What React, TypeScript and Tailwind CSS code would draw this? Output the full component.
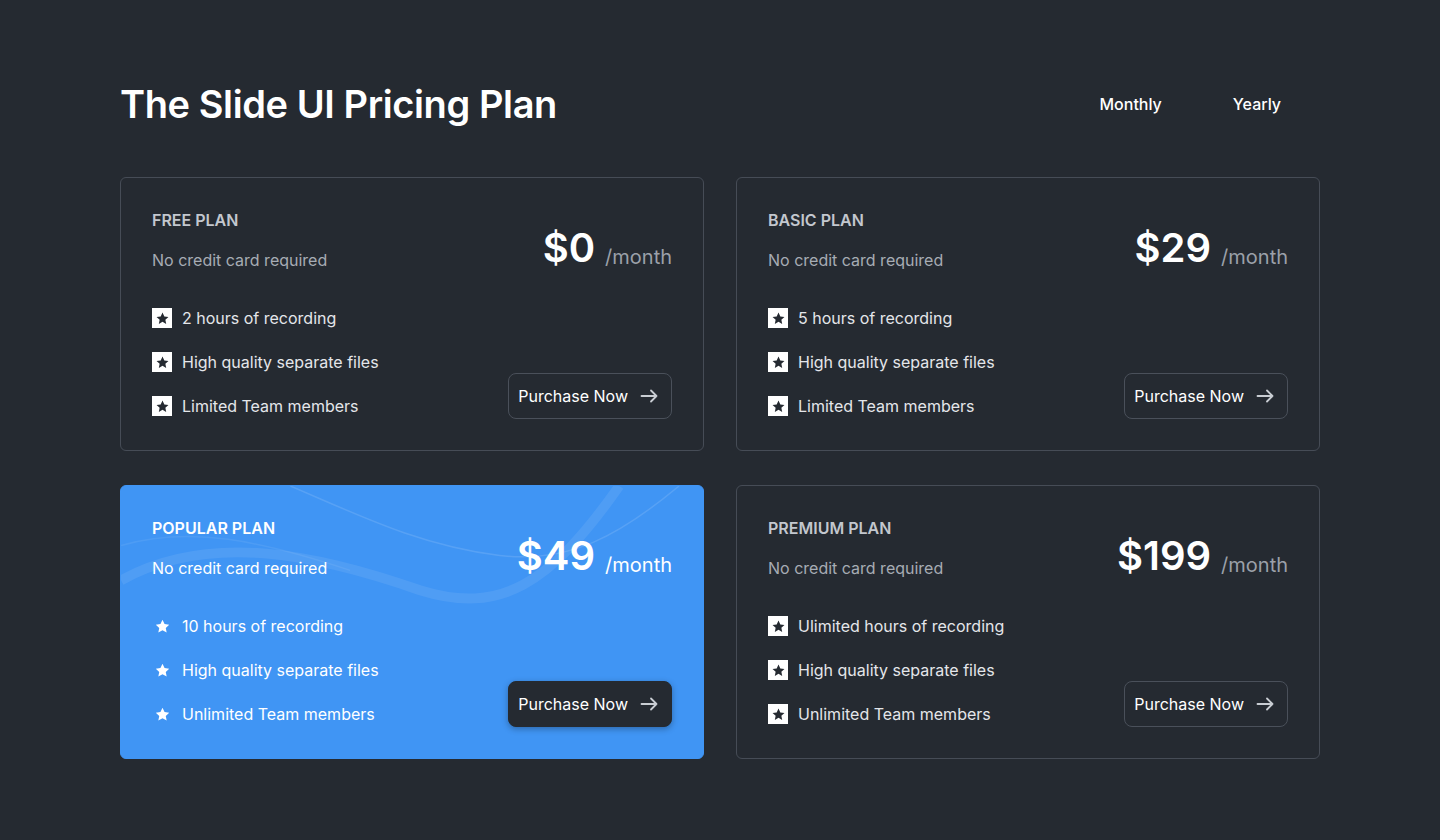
type Plan = {
  name: string;
  price: string;
  features: string[];
  popular?: boolean;
};

const plans: Plan[] = [
  {
    name: "Free Plan",
    price: "$0",
    features: ["2 hours of recording", "High quality separate files", "Limited Team members"],
  },
  {
    name: "Basic Plan",
    price: "$29",
    features: ["5 hours of recording", "High quality separate files", "Limited Team members"],
  },
  {
    name: "Popular Plan",
    price: "$49",
    popular: true,
    features: ["10 hours of recording", "High quality separate files", "Unlimited Team members"],
  },
  {
    name: "Premium Plan",
    price: "$199",
    features: ["Ulimited hours of recording", "High quality separate files", "Unlimited Team members"],
  },
];

function StarShape({ className }: { className?: string }) {
  return (
    <svg viewBox="0 0 24 24" className={className}>
      <path
        d="M12 2.5l2.9 6.1 6.6.8-4.9 4.6 1.3 6.6L12 17.3l-5.9 3.3 1.3-6.6-4.9-4.6 6.6-.8z"
        fill="currentColor"
      />
    </svg>
  );
}

function Arrow() {
  return (
    <svg
      viewBox="0 0 18 14"
      className="w-[18px] h-[14px] text-[#c9cdd3]"
      fill="none"
      stroke="currentColor"
      strokeWidth="1.8"
      strokeLinecap="round"
      strokeLinejoin="round"
    >
      <path d="M1.5 7h15M11 1.5L16.5 7 11 12.5" />
    </svg>
  );
}

function Waves() {
  return (
    <svg
      className="absolute inset-0 w-full h-full pointer-events-none"
      viewBox="0 0 584 274"
      preserveAspectRatio="none"
    >
      <path
        d="M0 95 C 90 45, 200 70, 300 105 C 380 130, 430 100, 500 0"
        stroke="#ffffff"
        strokeOpacity="0.08"
        strokeWidth="10"
        fill="none"
      />
      <path
        d="M170 0 C 240 30, 300 60, 380 70 C 450 78, 500 50, 560 0"
        stroke="#ffffff"
        strokeOpacity="0.12"
        strokeWidth="1.5"
        fill="none"
      />
      <path
        d="M0 60 C 70 40, 140 55, 230 85"
        stroke="#ffffff"
        strokeOpacity="0.07"
        strokeWidth="1.5"
        fill="none"
      />
    </svg>
  );
}

function PlanCard({ plan }: { plan: Plan }) {
  const pop = plan.popular;

  return (
    <div
      className={
        pop
          ? "relative overflow-hidden rounded-md bg-[#4095f4] border border-[#4095f4] px-[31px] pt-[30px] pb-8"
          : "relative overflow-hidden rounded-md border border-[#464c56] px-[31px] pt-[30px] pb-8"
      }
    >
      {pop && <Waves />}

      <div className="relative flex justify-between">
        {/* LEFT */}
        <div>
          <div
            className={
              pop
                ? "uppercase font-semibold text-base leading-6 text-white"
                : "uppercase font-semibold text-base leading-6 text-[#c3c7ce]"
            }
          >
            {plan.name}
          </div>

          <div
            className={
              pop
                ? "mt-4 text-base leading-6 text-white"
                : "mt-4 text-base leading-6 text-[#a7acb4]"
            }
          >
            No credit card required
          </div>

          <div className="mt-[34px] flex flex-col gap-5">
            {plan.features.map((f) => (
              <div key={f} className="flex items-center gap-[10px] leading-6">
                {pop ? (
                  <span className="w-5 h-5 flex items-center justify-center">
                    <StarShape className="w-[17px] h-[17px] text-white" />
                  </span>
                ) : (
                  <span className="w-5 h-5 bg-white flex items-center justify-center">
                    <StarShape className="w-[15px] h-[15px] text-[#252a31]" />
                  </span>
                )}
                <span className={pop ? "text-white" : "text-[#e4e6ea]"}>{f}</span>
              </div>
            ))}
          </div>
        </div>

        {/* RIGHT */}
        <div className="flex flex-col items-end justify-between">
          <div className="flex items-baseline gap-[10px] mt-[12px]">
            <span className="text-[40px] leading-[56px] font-semibold text-white">
              {plan.price}
            </span>
            <span
              className={
                pop
                  ? "text-xl text-white relative top-[2px]"
                  : "text-xl text-[#9ba0a9] relative top-[2px]"
              }
            >
              /month
            </span>
          </div>

          <button
            className={
              pop
                ? "flex items-center gap-3 pl-[9px] pr-[13px] py-[10px] rounded-lg bg-[#252a31] border border-[#252a31] text-white shadow-[0_2px_6px_rgba(0,0,0,0.3)] leading-6 mb-[-1px]"
                : "flex items-center gap-3 pl-[9px] pr-[13px] py-[10px] rounded-lg border border-[#4a505a] text-white leading-6 mb-[-1px]"
            }
          >
            Purchase Now
            <Arrow />
          </button>
        </div>
      </div>
    </div>
  );
}

export default function App() {
  return (
    <div
      className="min-h-screen w-full bg-[#252a31] text-white"
      style={{ fontFamily: "Inter, 'Noto Sans', sans-serif" }}
    >
      <div className="w-[1200px] mx-auto pt-[76px]">
        {/* HEADER */}
        <div className="flex items-center justify-between">
          <h1 className="text-[38px] leading-[56px] font-semibold tracking-[-0.4px] text-white">
            The Slide UI Pricing Plan
          </h1>

          <div className="flex items-center gap-[71px] mr-[39px] text-base font-medium">
            <button className="text-white">Monthly</button>
            <button className="text-white">Yearly</button>
          </div>
        </div>

        {/* GRID */}
        <div className="grid grid-cols-2 gap-x-8 gap-y-[34px] mt-[45px]">
          {plans.map((p) => (
            <PlanCard key={p.name} plan={p} />
          ))}
        </div>
      </div>
    </div>
  );
}
